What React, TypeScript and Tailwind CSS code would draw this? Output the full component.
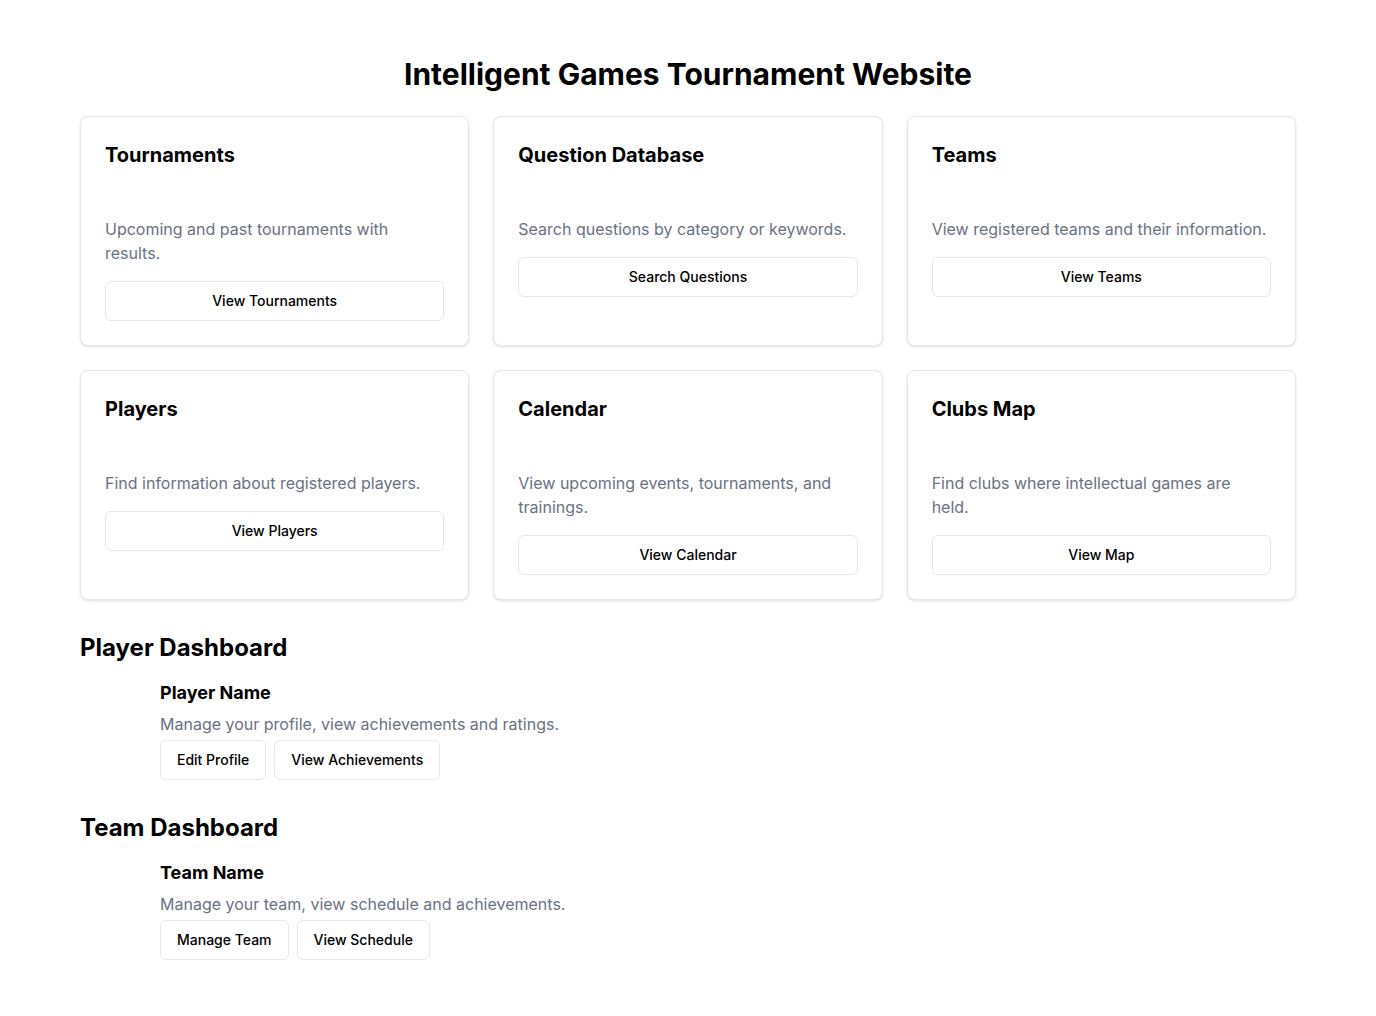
import React from 'react';

interface Feature {
  title: string;
  description: string;
  action: string;
}

const features: Feature[] = [
  { title: 'Tournaments', description: 'Upcoming and past tournaments with results.', action: 'View Tournaments' },
  { title: 'Question Database', description: 'Search questions by category or keywords.', action: 'Search Questions' },
  { title: 'Teams', description: 'View registered teams and their information.', action: 'View Teams' },
  { title: 'Players', description: 'Find information about registered players.', action: 'View Players' },
  { title: 'Calendar', description: 'View upcoming events, tournaments, and trainings.', action: 'View Calendar' },
  { title: 'Clubs Map', description: 'Find clubs where intellectual games are held.', action: 'View Map' },
];

const OutlineButton: React.FC<{ children: React.ReactNode; full?: boolean }> = ({ children, full }) => (
  <button
    className={`h-10 px-4 inline-flex items-center justify-center rounded-md border border-gray-200 bg-white text-sm font-medium text-black ${
      full ? 'w-full' : ''
    }`}
  >
    {children}
  </button>
);

const FeatureCard: React.FC<{ feature: Feature }> = ({ feature }) => (
  <div className="rounded-lg border border-gray-200 bg-white p-6 shadow-sm">
    <h3 className="text-xl font-bold leading-7 text-black">{feature.title}</h3>
    <p className="mt-12 text-base leading-6 text-gray-500">{feature.description}</p>
    <div className="mt-4">
      <OutlineButton full>{feature.action}</OutlineButton>
    </div>
  </div>
);

const Dashboard: React.FC<{ heading: string; name: string; text: string; actions: string[] }> = ({
  heading,
  name,
  text,
  actions,
}) => (
  <section className="mt-8">
    <h2 className="text-2xl font-bold leading-8 text-black">{heading}</h2>
    <div className="mt-[15px] pl-20">
      <h3 className="text-lg font-bold leading-7 text-black">{name}</h3>
      <p className="mt-[5px] text-base leading-6 text-gray-500">{text}</p>
      <div className="mt-1 flex gap-2">
        {actions.map((a) => (
          <OutlineButton key={a}>{a}</OutlineButton>
        ))}
      </div>
    </div>
  </section>
);

export default function App() {
  return (
    <div className="min-h-screen bg-white px-20 pt-14 pb-14 font-['Inter',sans-serif]">
      <h1 className="text-center text-3xl font-bold leading-9 text-black">
        Intelligent Games Tournament Website
      </h1>
      <div className="mt-6 grid grid-cols-3 gap-6">
        {features.map((f) => (
          <FeatureCard key={f.title} feature={f} />
        ))}
      </div>
      <Dashboard
        heading="Player Dashboard"
        name="Player Name"
        text="Manage your profile, view achievements and ratings."
        actions={['Edit Profile', 'View Achievements']}
      />
      <Dashboard
        heading="Team Dashboard"
        name="Team Name"
        text="Manage your team, view schedule and achievements."
        actions={['Manage Team', 'View Schedule']}
      />
    </div>
  );
}
